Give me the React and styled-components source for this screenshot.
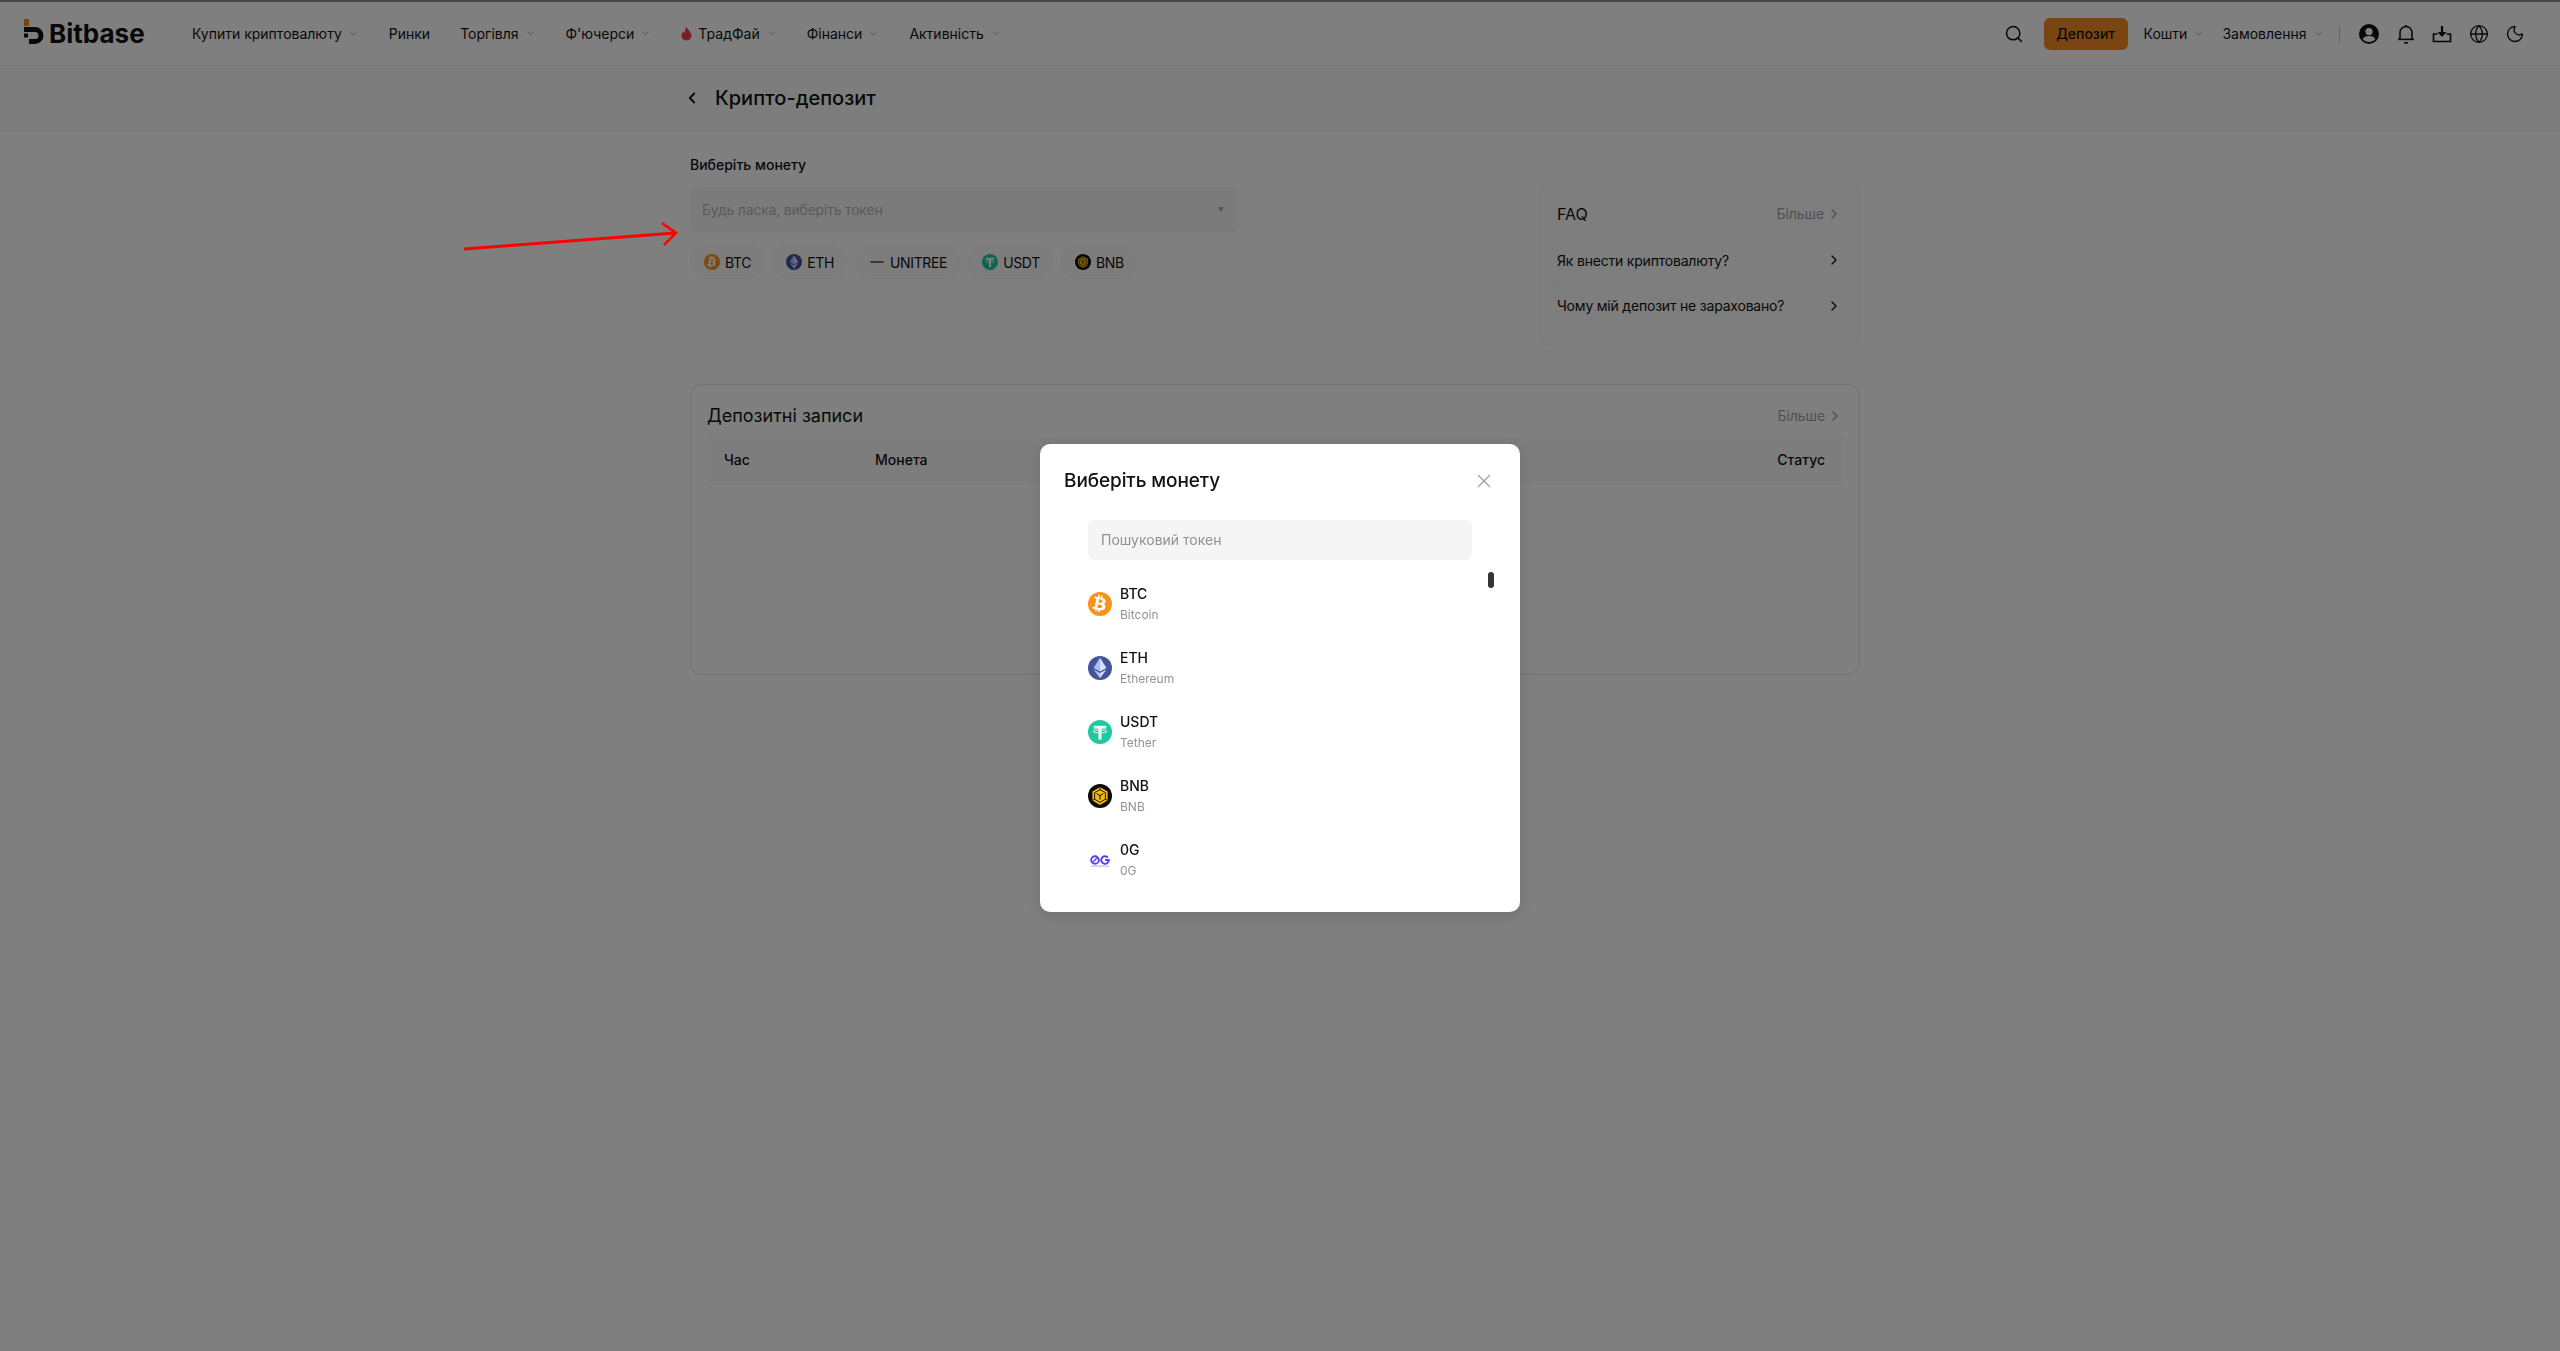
import React from 'react';
import styled, { createGlobalStyle } from 'styled-components';
import { Search, ChevronDown, ChevronRight, ChevronLeft, Globe, Moon, X } from 'lucide-react';
import { FaBtc } from 'react-icons/fa';

const NAV_ITEMS = [
  { label: 'Купити криптовалюту', arrow: true },
  { label: 'Ринки' },
  { label: 'Торгівля', arrow: true },
  { label: "Ф'ючерси", arrow: true },
  { label: 'ТрадФай', arrow: true, hot: true },
  { label: 'Фінанси', arrow: true },
  { label: 'Активність', arrow: true },
];

const QUICK_COINS = ['BTC', 'ETH', 'UNITREE', 'USDT', 'BNB'];

const COIN_LIST = [
  { symbol: 'BTC', name: 'Bitcoin' },
  { symbol: 'ETH', name: 'Ethereum' },
  { symbol: 'USDT', name: 'Tether' },
  { symbol: 'BNB', name: 'BNB' },
  { symbol: '0G', name: '0G' },
];

const CoinIcon = ({ coin, size }) => {
  if (coin === 'BTC') {
    return (
      <BtcBadge $size={size}>
        <FaBtc size={size * 0.72} color="#fff" />
      </BtcBadge>
    );
  }
  if (coin === 'ETH') {
    return (
      <svg width={size} height={size} viewBox="0 0 24 24">
        <circle cx="12" cy="12" r="12" fill="#43549b" />
        <polygon points="12,1.8 5.5,12 12,15.6" fill="#a9bcf5" />
        <polygon points="12,1.8 18.5,12 12,15.6" fill="#d5defc" />
        <polygon points="5.5,13.4 12,17 12,22.2" fill="#a9bcf5" />
        <polygon points="18.5,13.4 12,17 12,22.2" fill="#d5defc" />
      </svg>
    );
  }
  if (coin === 'USDT') {
    return (
      <svg width={size} height={size} viewBox="0 0 24 24">
        <circle cx="12" cy="12" r="12" fill="#1fc9a0" />
        <rect x="5.8" y="5.8" width="12.4" height="2.8" fill="#fff" />
        <rect x="10.5" y="8" width="3" height="11.6" fill="#fff" />
        <ellipse cx="12" cy="11.4" rx="6.8" ry="1.5" fill="none" stroke="#fff" strokeWidth="0.9" />
      </svg>
    );
  }
  if (coin === 'BNB') {
    return (
      <svg width={size} height={size} viewBox="0 0 24 24">
        <circle cx="12" cy="12" r="12" fill="#0b0b0b" />
        <polygon points="12,3 19.6,7.4 19.6,16.4 12,21 4.4,16.4 4.4,7.4" fill="#f0b90b" />
        <polygon points="12,5.6 17.4,8.7 17.4,15.2 12,18.4 6.6,15.2 6.6,8.7" fill="none" stroke="#0b0b0b" strokeWidth="0.9" />
        <path d="M8.6 9.6L12 11.6L15.4 9.6M12 11.6V15.6M12 3V5.6M4.4 16.4L6.6 15.2M19.6 16.4L17.4 15.2" stroke="#0b0b0b" strokeWidth="1" fill="none" />
      </svg>
    );
  }
  if (coin === '0G') {
    return (
      <svg width={size} height={size} viewBox="0 0 24 24">
        <circle cx="7" cy="12" r="3.8" fill="none" stroke="#4f3ff0" strokeWidth="1.9" />
        <path d="M4.8 14.3L9.2 9.7" stroke="#4f3ff0" strokeWidth="1.3" />
        <path d="M19.9 9.6A3.8 3.8 0 1 0 20.8 12H17" fill="none" stroke="#4f3ff0" strokeWidth="1.9" />
        <rect x="3" y="17.6" width="18" height="0.9" fill="#a79ff7" />
      </svg>
    );
  }
  // UNITREE logo is only a thin dark wordmark at this size
  return (
    <svg width={size} height={size} viewBox="0 0 24 24">
      <rect x="2" y="11" width="20" height="2" fill="#333" />
    </svg>
  );
};

const App = () => {
  return (
    <>
      <GlobalStyle />
      <Page>
        <Header>
          <Logo>
            <LogoMark width="20" height="26" viewBox="0 0 20 26">
              <rect x="0" y="1" width="5" height="7" fill="#f08a1d" />
              <path d="M0 9H11A8.5 8.5 0 0 1 11 26H5V21H11A3.5 3.5 0 0 0 11 14H0Z" fill="#111" />
              <rect x="0" y="15.5" width="4" height="4" fill="#111" />
            </LogoMark>
            <LogoText>Bitbase</LogoText>
          </Logo>
          <Nav>
            {NAV_ITEMS.map((item) => (
              <NavItem key={item.label}>
                {item.hot && (
                  <svg width="11" height="15" viewBox="0 0 12 15">
                    <path d="M6 0C7 3 11 5.5 11.5 9.5C11.8 12.6 9.2 15 6 15C2.8 15 0.2 12.6 0.5 9.5C0.7 7.5 1.8 6.4 2.6 5C3 6 3.4 6.6 4 7C4.4 4.4 4.6 2 6 0Z" fill="#f03e4e" />
                  </svg>
                )}
                {item.label}
                {item.arrow && <NavCaret size={11} />}
              </NavItem>
            ))}
          </Nav>
          <HeaderRight>
            <Search size={20} strokeWidth={1.8} />
            <DepositButton>Депозит</DepositButton>
            <HeaderLinks>
              <HeaderLink>
                Кошти
                <NavCaret size={11} />
              </HeaderLink>
              <HeaderLink>
                Замовлення
                <NavCaret size={11} />
              </HeaderLink>
            </HeaderLinks>
            <HeaderDivider />
            <HeaderIcons>
              <svg width="20" height="20" viewBox="0 0 20 20">
                <circle cx="10" cy="10" r="10" fill="#111" />
                <circle cx="10" cy="7.6" r="3.6" fill="#fff" />
                <path d="M3.8 15.2C5 12.6 7.4 12 10 12C12.6 12 15 12.6 16.2 15.2C14.6 17 12.4 18 10 18C7.6 18 5.4 17 3.8 15.2Z" fill="#fff" />
              </svg>
              <svg width="20" height="20" viewBox="0 0 20 20" fill="none" stroke="#111" strokeWidth="1.6">
                <path d="M4 15V8.5A6 6 0 0 1 16 8.5V15" />
                <path d="M2 15.4H18" />
                <path d="M10 1V2.5" />
                <path d="M8 18.8H12" />
              </svg>
              <svg width="20" height="20" viewBox="0 0 20 20">
                <path d="M5.5 10H1.5V17.5H18.5V10H14.5" fill="none" stroke="#111" strokeWidth="1.7" />
                <path d="M10 2V9" stroke="#111" strokeWidth="2.2" />
                <path d="M5.5 8H14.5L10 13Z" fill="#111" />
              </svg>
              <Globe size={20} strokeWidth={1.6} />
              <Moon size={20} strokeWidth={1.6} />
            </HeaderIcons>
          </HeaderRight>
        </Header>

        <TitleBand>
          <TitleInner>
            <ChevronLeft size={18} strokeWidth={2.4} color="#111" />
            <PageTitle>Крипто-депозит</PageTitle>
          </TitleInner>
        </TitleBand>

        <Main>
          <TopRow>
            <CoinColumn>
              <FieldLabel>Виберіть монету</FieldLabel>
              <SelectBox>
                <span>Будь ласка, виберіть токен</span>
                <SelectCaret />
              </SelectBox>
              <ChipRow>
                {QUICK_COINS.map((coin) => (
                  <Chip key={coin}>
                    <CoinIcon coin={coin} size={16} />
                    {coin}
                  </Chip>
                ))}
              </ChipRow>
            </CoinColumn>
            <FaqCard>
              <FaqHead>
                <FaqTitle>FAQ</FaqTitle>
                <MoreLink>
                  Більше
                  <ChevronRight size={16} />
                </MoreLink>
              </FaqHead>
              <FaqRow>
                Як внести криптовалюту?
                <ChevronRight size={16} />
              </FaqRow>
              <FaqRow $last>
                Чому мій депозит не зараховано?
                <ChevronRight size={16} />
              </FaqRow>
            </FaqCard>
          </TopRow>

          <RecordsCard>
            <RecordsHead>
              <RecordsTitle>Депозитні записи</RecordsTitle>
              <MoreLink>
                Більше
                <ChevronRight size={16} />
              </MoreLink>
            </RecordsHead>
            <TableHead>
              <span>Час</span>
              <span>Монета</span>
              <StatusCell>Статус</StatusCell>
            </TableHead>
          </RecordsCard>
        </Main>

        <Overlay>
          <Modal>
            <ModalHead>
              <ModalTitle>Виберіть монету</ModalTitle>
              <X size={22} strokeWidth={1.7} color="#a8a8a8" />
            </ModalHead>
            <SearchInput placeholder="Пошуковий токен" />
            <CoinList>
              <ScrollThumb />
              {COIN_LIST.map((coin) => (
                <CoinRow key={coin.symbol}>
                  <CoinIcon coin={coin.symbol} size={24} />
                  <CoinText>
                    <CoinSymbol>{coin.symbol}</CoinSymbol>
                    <CoinName>{coin.name}</CoinName>
                  </CoinText>
                </CoinRow>
              ))}
            </CoinList>
          </Modal>
        </Overlay>

        <Annotation width="230" height="40" viewBox="0 0 230 40">
          <path d="M0 29L211 13" stroke="#ff0000" strokeWidth="3" fill="none" />
          <path d="M198 3L212 13L200 25" stroke="#ff0000" strokeWidth="2.5" fill="none" />
        </Annotation>
      </Page>
    </>
  );
};

// Styled Components

const GlobalStyle = createGlobalStyle`
  * {
    box-sizing: border-box;
  }

  html, body {
    margin: 0;
    padding: 0;
    background: #fff;
  }

  body {
    font-family: Inter, "Noto Sans", sans-serif;
    color: #111;
  }
`;

const Page = styled.div`
  position: relative;
  min-height: 1351px;
  overflow: hidden;
  background: #fff;
`;

const Header = styled.header`
  display: flex;
  align-items: center;
  height: 66px;
  padding: 0 35px 0 24px;
  border-top: 2px solid #909090;
  border-bottom: 1px solid #f4f4f4;
`;

const Logo = styled.div`
  display: flex;
  align-items: center;
  gap: 5px;
  width: 168px;
`;

const LogoMark = styled.svg`
  margin-top: -5px;
`;

const LogoText = styled.span`
  font-size: 26px;
  font-weight: 700;
`;

const Nav = styled.nav`
  display: flex;
  align-items: center;
  gap: 30px;
`;

const NavItem = styled.div`
  display: flex;
  align-items: center;
  gap: 6px;
  font-size: 14px;
  white-space: nowrap;
`;

const NavCaret = styled(ChevronDown)`
  color: #a0a0a0;
`;

const HeaderRight = styled.div`
  display: flex;
  align-items: center;
  margin-left: auto;
`;

const DepositButton = styled.button`
  width: 84px;
  height: 32px;
  margin: 0 16px 0 20px;
  border: none;
  border-radius: 6px;
  background: #f48a20;
  color: #111;
  font-family: inherit;
  font-size: 14px;
  font-weight: 500;
`;

const HeaderLinks = styled.div`
  display: flex;
  align-items: center;
  gap: 18px;
  margin-right: 15.5px;
`;

const HeaderLink = styled.div`
  display: flex;
  align-items: center;
  gap: 6px;
  font-size: 14px;
  white-space: nowrap;
`;

const HeaderDivider = styled.div`
  width: 1px;
  height: 16px;
  margin-right: 19px;
  background: #c8c8c8;
`;

const HeaderIcons = styled.div`
  display: flex;
  align-items: center;
  gap: 16.5px;
  color: #111;
`;

const TitleBand = styled.div`
  height: 65px;
  background: #fafafa;
  border-bottom: 1px solid #f2f2f2;
`;

const TitleInner = styled.div`
  display: flex;
  align-items: center;
  gap: 14px;
  height: 100%;
  margin-left: 683px;
`;

const PageTitle = styled.h1`
  margin: 0;
  font-size: 20px;
  font-weight: 500;
`;

const Main = styled.main`
  width: 1170px;
  margin-left: 690px;
`;

const TopRow = styled.section`
  display: flex;
  justify-content: space-between;
  align-items: flex-start;
  padding-top: 24px;
`;

const CoinColumn = styled.div`
  width: 549px;
`;

const FieldLabel = styled.div`
  height: 20px;
  font-size: 14px;
  font-weight: 500;
  line-height: 20px;
`;

const SelectBox = styled.div`
  display: flex;
  align-items: center;
  justify-content: space-between;
  height: 46px;
  margin-top: 12px;
  padding: 0 15px 2px 12px;
  border-radius: 8px;
  background: #f6f6f6;
  color: #b4b4b8;
  font-size: 14px;
  letter-spacing: -0.2px;
`;

const SelectCaret = styled.i`
  width: 0;
  height: 0;
  border-left: 3.5px solid transparent;
  border-right: 3.5px solid transparent;
  border-top: 5px solid #b0b0b0;
`;

const ChipRow = styled.div`
  display: flex;
  gap: 8px;
  margin-top: 12px;
`;

const Chip = styled.div`
  display: flex;
  align-items: center;
  gap: 5px;
  height: 34px;
  padding: 0 12px 0 13px;
  border: 1px solid #f4f4f4;
  border-radius: 17px;
  background: #fbfbfb;
  font-size: 14px;
  letter-spacing: -0.35px;
`;

const BtcBadge = styled.span`
  display: inline-flex;
  align-items: center;
  justify-content: center;
  flex: none;
  width: ${(p) => p.$size}px;
  height: ${(p) => p.$size}px;
  border-radius: 50%;
  background: #f7931a;

  svg {
    transform: rotate(12deg);
  }
`;

const FaqCard = styled.aside`
  width: 321px;
  height: 160px;
  margin-top: 30px;
  padding: 0 17px;
  border: 1px solid #f4f4f4;
  border-radius: 12px;
  background: #fcfcfc;
`;

const FaqHead = styled.div`
  display: flex;
  align-items: center;
  justify-content: space-between;
  height: 53px;
  padding-top: 3px;
  border-bottom: 1px solid #f2f2f2;
`;

const FaqTitle = styled.div`
  font-size: 16px;
`;

const MoreLink = styled.div`
  display: flex;
  align-items: center;
  gap: 2px;
  color: #a0a0a0;
  font-size: 14px;
  letter-spacing: -0.1px;
`;

const FaqRow = styled.div`
  display: flex;
  align-items: center;
  justify-content: space-between;
  height: 45px;
  padding-bottom: 2px;
  border-bottom: ${(p) => (p.$last ? 'none' : '1px solid #f2f2f2')};
  font-size: 14px;
  letter-spacing: -0.2px;
`;

const RecordsCard = styled.section`
  height: 291px;
  margin-top: 39px;
  padding: 0 16px;
  border: 1px solid #e0e0e0;
  border-radius: 12px;
`;

const RecordsHead = styled.div`
  display: flex;
  align-items: center;
  justify-content: space-between;
  height: 52px;
  padding-top: 9px;
`;

const RecordsTitle = styled.h2`
  margin: 0;
  font-size: 18px;
  font-weight: 400;
`;

const TableHead = styled.div`
  display: grid;
  grid-template-columns: 151px 1fr auto;
  align-items: center;
  height: 44px;
  padding: 1px 18px 0 17px;
  background: #fbfbfb;
  border-bottom: 1px solid #f2f2f2;
  font-size: 14px;
  font-weight: 500;
`;

const StatusCell = styled.span`
  text-align: right;
`;

const Overlay = styled.div`
  position: fixed;
  inset: 0;
  z-index: 10;
  display: flex;
  align-items: center;
  justify-content: center;
  padding-top: 5px;
  background: rgba(0, 0, 0, 0.5);
`;

const Modal = styled.div`
  width: 480px;
  height: 468px;
  border-radius: 10px;
  background: #fff;
  box-shadow: 0 4px 16px rgba(0, 0, 0, 0.12);
`;

const ModalHead = styled.div`
  display: flex;
  align-items: center;
  justify-content: space-between;
  height: 76px;
  padding: 0 25px 3px 24px;
`;

const ModalTitle = styled.h3`
  margin: 0;
  font-size: 19px;
  font-weight: 500;
  letter-spacing: -0.1px;
`;

const SearchInput = styled.input`
  display: block;
  width: 384px;
  height: 40px;
  margin: 0 auto;
  padding: 0 13px 2px;
  border: none;
  border-radius: 8px;
  outline: none;
  background: #f5f5f5;
  font-family: inherit;
  font-size: 14px;

  &::placeholder {
    color: #8f8f96;
    opacity: 1;
  }
`;

const CoinList = styled.div`
  position: relative;
  margin-top: 12px;
  padding: 0 48px;
`;

const ScrollThumb = styled.div`
  position: absolute;
  top: 0;
  right: 26px;
  width: 6px;
  height: 16px;
  border-radius: 3px;
  background: #33353a;
`;

const CoinRow = styled.div`
  display: flex;
  align-items: center;
  gap: 8px;
  height: 64px;
`;

const CoinText = styled.div`
  display: flex;
  flex-direction: column;
  gap: 3px;
  padding-bottom: 2px;
`;

const CoinSymbol = styled.div`
  font-size: 14px;
  font-weight: 500;
  line-height: 20px;
`;

const CoinName = styled.div`
  color: #92929a;
  font-size: 12px;
  line-height: 16px;
`;

const Annotation = styled.svg`
  position: absolute;
  top: 220px;
  left: 464px;
  z-index: 20;
`;

export default App;
